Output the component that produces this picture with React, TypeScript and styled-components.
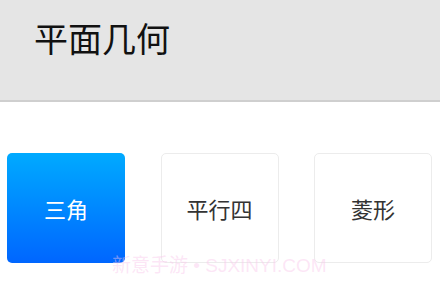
import React from 'react';
import styled, { createGlobalStyle } from 'styled-components';

const GlobalStyle = createGlobalStyle`
  html, body {
    margin: 0;
    padding: 0;
    background: #ffffff;
    font-family: "Noto Sans CJK SC", "Noto Sans", sans-serif;
  }
`;

const Page = styled.div`
  position: relative;
  width: 440px;
  height: 286px;
  overflow: hidden;
  background: #ffffff;
`;

const Header = styled.header`
  height: 102px;
  background: #e5e5e5;
  border-bottom: 2px solid #cfcfcf;
  display: flex;
  align-items: flex-start;
  padding: 15px 0 0 34px;
  box-sizing: border-box;
`;

const Title = styled.h1`
  margin: 0;
  font-size: 34px;
  font-weight: 400;
  color: #111111;
  line-height: 46px;
`;

const CardRow = styled.div`
  display: flex;
  justify-content: space-between;
  padding: 51px 8px 0 7px;
`;

const Card = styled.div<{ $active?: boolean }>`
  width: 118px;
  height: 110px;
  box-sizing: border-box;
  border-radius: 5px;
  display: flex;
  align-items: center;
  justify-content: center;
  font-size: 22px;
  color: ${(p) => (p.$active ? '#ffffff' : '#333333')};
  background: ${(p) =>
    p.$active ? 'linear-gradient(180deg, #00aaff 0%, #0066ff 100%)' : '#ffffff'};
  border: ${(p) => (p.$active ? 'none' : '1px solid #ececec')};
`;

const Watermark = styled.div`
  position: absolute;
  left: 112px;
  top: 250px;
  font-family: "Liberation Sans", "Noto Sans CJK SC", sans-serif;
  font-size: 19px;
  color: rgba(250, 200, 235, 0.45);
  white-space: nowrap;
  pointer-events: none;
`;

const shapes = ['三角', '平行四', '菱形'];

const App: React.FC = () => {
  return (
    <Page>
      <GlobalStyle />
      <Header>
        <Title>平面几何</Title>
      </Header>
      <CardRow>
        {shapes.map((s, i) => (
          <Card key={s} $active={i === 0}>
            {s}
          </Card>
        ))}
      </CardRow>
      <Watermark>新意手游 • SJXINYI.COM</Watermark>
    </Page>
  );
};

export default App;
